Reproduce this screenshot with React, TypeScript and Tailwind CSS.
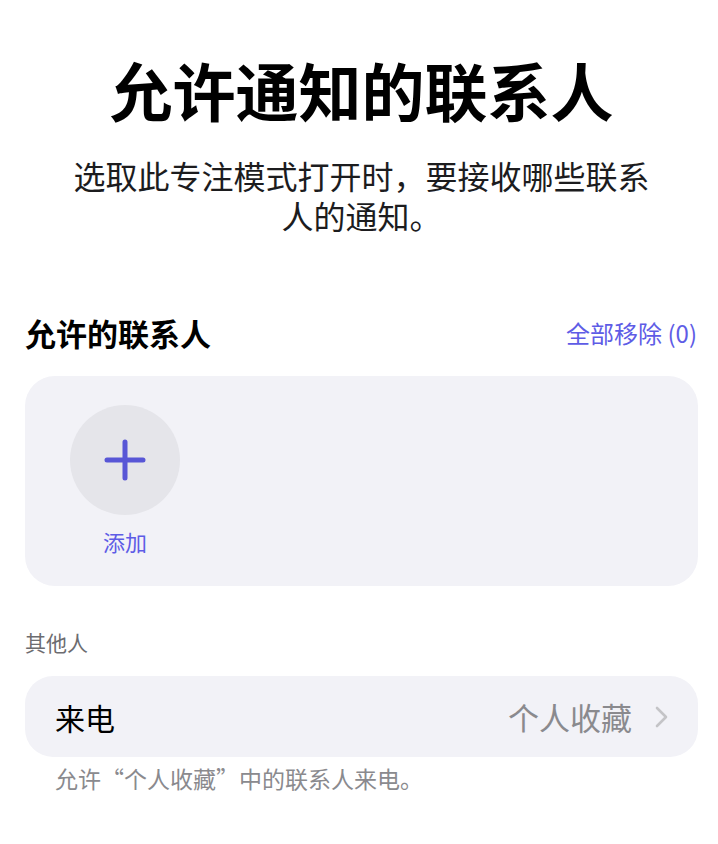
const font = { fontFamily: '"Noto Sans CJK SC", "Noto Sans", sans-serif' }

function PlusIcon() {
    return (
        <svg width="42" height="42" viewBox="0 0 42 42" fill="none">
            <path d="M21 3v36M3 21h36" stroke="#5856d6" strokeWidth="5" strokeLinecap="round" />
        </svg>
    )
}

function Chevron() {
    return (
        <svg width="13" height="22" viewBox="0 0 13 22" fill="none">
            <path d="M2 2l9 9-9 9" stroke="#c4c4c7" strokeWidth="2.6" strokeLinecap="round" strokeLinejoin="round" />
        </svg>
    )
}

export default function App() {
    return (
        <div className="min-h-[844px] w-full bg-white pl-[25px] pr-[20px] pt-[57px]" style={font}>
            <h1 className="text-center text-[63px] font-bold leading-[63px] text-black">允许通知的联系人</h1>
            <p className="mx-auto mt-[35px] max-w-[590px] text-center text-[32px] leading-[40px] text-[#1c1c1e]">
                选取此专注模式打开时，要接收哪些联系人的通知。
            </p>

            <div className="mt-[82px] flex items-center justify-between">
                <h2 className="text-[31px] font-semibold leading-[31px] text-black">允许的联系人</h2>
                <button className="pr-[1px] text-[24px] leading-[24px] text-[#5e5ce6]">全部移除 (0)</button>
            </div>

            <div className="mt-[28px] h-[210px] rounded-[30px] bg-[#f2f2f7] pl-[45px] pt-[29px]">
                <div className="flex w-[110px] flex-col items-center">
                    <div className="flex h-[110px] w-[110px] items-center justify-center rounded-full bg-[#e5e5ea]">
                        <PlusIcon />
                    </div>
                    <span className="mt-[15px] text-[22px] leading-[22px] text-[#5e5ce6]">添加</span>
                </div>
            </div>

            <div className="mt-[46px] text-[21px] leading-[21px] text-[#6c6c70]">其他人</div>

            <div className="mt-[23px] flex h-[81px] items-center justify-between rounded-[28px] bg-[#f2f2f7] px-[30px]">
                <span className="text-[30px] leading-[30px] text-black">来电</span>
                <div className="flex items-center gap-[23px]">
                    <span className="text-[31px] leading-[31px] text-[#8a8a8e]">个人收藏</span>
                    <Chevron />
                </div>
            </div>

            <p className="mt-[10px] pl-[30px] text-[23px] leading-[23px] text-[#8a8a8e]">允许“个人收藏”中的联系人来电。</p>
        </div>
    )
}
